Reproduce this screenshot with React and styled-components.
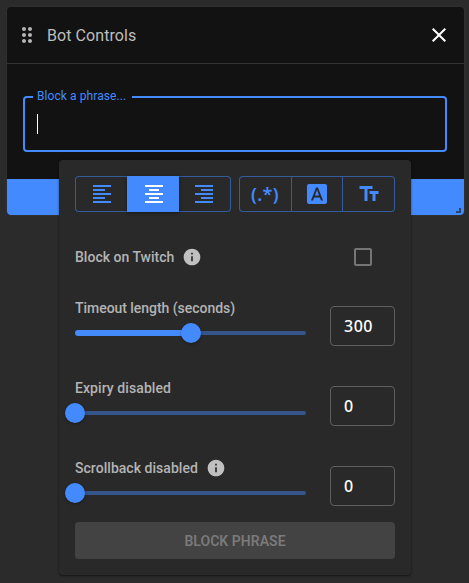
import React from "react";
import styled, { createGlobalStyle } from "styled-components";

const BLUE = "#448aff";

const GlobalStyle = createGlobalStyle`
  *, *::before, *::after { box-sizing: border-box; }
  body {
    margin: 0;
    background: #2b2b2b;
    color: #fff;
    font-family: Roboto, "Noto Sans", sans-serif;
    overflow: hidden;
  }
`;

const Page = styled.main`
  height: 583px;
  padding: 7px 5px 0 7px;
`;

const Panel = styled.section`
  position: relative;
  display: flex;
  flex-direction: column;
  width: 457px;
  height: 208px;
  background: #121212;
  border-radius: 4px;
  box-shadow: 0 0 0 1px #303030;
`;

const Header = styled.header`
  display: flex;
  align-items: center;
  height: 57px;
  padding: 0 13px 0 8px;
  border-bottom: 1px solid #333;
`;

const Title = styled.h1`
  flex: 1;
  margin: 0 0 0 8px;
  padding-top: 2px;
  font-size: 16px;
  line-height: 24px;
  font-weight: 400;
  letter-spacing: 0.07px;
  color: #bebebe;
`;

const Icon = styled.svg`
  display: block;
  flex: none;
  width: ${(p) => p.$size || 24}px;
  height: ${(p) => p.$size || 24}px;
  fill: ${(p) => p.$color || "currentColor"};
`;

const Body = styled.div`
  flex: 1;
  padding: 26px 17px 0 16px;
`;

const PhraseField = styled.fieldset`
  height: 62px;
  margin: 0;
  padding: 0 12px;
  min-width: 0;
  border: 2px solid ${BLUE};
  border-radius: 4px;
`;

const Legend = styled.legend`
  margin-left: -4px;
  padding: 0 7px 0 4px;
  width: 99px;
  height: 14px;
  font-size: 12px;
  line-height: 13px;
  letter-spacing: 0.08px;
  white-space: nowrap;
  color: ${BLUE};
`;

const Caret = styled.div`
  width: 1px;
  height: 20px;
  margin-top: 10px;
  background: #fff;
`;

const Footer = styled.footer`
  display: flex;
  align-items: flex-end;
  justify-content: flex-end;
  height: 36px;
  padding: 0 3px 2px 0;
  background: ${BLUE};
  border-radius: 0 0 4px 4px;
`;

const ResizeGrip = styled.span`
  width: 5px;
  height: 5px;
  border: solid #27446f;
  border-width: 0 2px 2px 0;
`;

const Popover = styled.div`
  position: absolute;
  left: 52px;
  top: 153px;
  width: 352px;
  height: 415px;
  padding: 16px;
  display: flex;
  flex-direction: column;
  background: #292929;
  border-radius: 4px;
  box-shadow: 0 1px 2px rgba(0, 0, 0, 0.45), 0 0 3px rgba(0, 0, 0, 0.15);
`;

const Toolbar = styled.div`
  display: flex;
  gap: 8px;
`;

const ToggleGroup = styled.div`
  display: grid;
  grid-template-columns: ${(p) => p.$columns || "52px 52px 52px"};
  width: 156px;
  height: 36px;
  border-radius: 4px;
  box-shadow: inset 0 0 0 1px #345b9e;
`;

const Toggle = styled.button`
  display: flex;
  align-items: center;
  justify-content: center;
  min-width: 0;
  padding: 0 ${(p) => p.$right || 0}px 0 ${(p) => p.$left || 0}px;
  border: 0;
  border-right: ${(p) => (p.$divider ? "1px solid #345b9e" : "0")};
  background: ${(p) => (p.$active ? BLUE : "transparent")};
  box-shadow: ${(p) => (p.$active ? "0 1px 3px rgba(0,0,0,.5)" : "none")};
  color: ${(p) => (p.$active ? "#fff" : BLUE)};
`;

const RegexMark = styled.span`
  font: 600 18px/24px "Noto Sans", sans-serif;
  letter-spacing: 0.4px;
`;

const CheckRow = styled.div`
  display: flex;
  align-items: center;
  justify-content: space-between;
  height: 24px;
  margin: 33px 20px 0 0;
`;

const Label = styled.div`
  display: flex;
  align-items: center;
  gap: 8px;
  height: 20px;
  font-size: 14px;
  line-height: 20px;
  font-weight: 500;
  letter-spacing: ${(p) => p.$spacing || "0"};
  white-space: nowrap;
  color: #b4b4b4;
`;

const SliderRow = styled.div`
  display: flex;
  justify-content: space-between;
  height: 40px;
  margin-top: ${(p) => p.$gap || 40}px;
`;

const SliderColumn = styled.div`
  width: 231px;
  margin-top: -8px;
`;

const Slider = styled.div`
  display: flex;
  align-items: center;
  height: 20px;
  margin-top: 5px;
`;

const Track = styled.span`
  flex: none;
  width: ${(p) => p.$value}px;
  height: 6px;
  background: ${BLUE};
  border-radius: 3px 0 0 3px;
`;

const Thumb = styled.span`
  flex: none;
  width: 20px;
  height: 20px;
  margin: 0 -10px;
  border-radius: 50%;
  background: ${BLUE};
  box-shadow: 0 1px 3px rgba(0, 0, 0, 0.35);
  z-index: 1;
`;

const Rail = styled.span`
  flex: 1;
  height: 4px;
  background: #34548a;
  border-radius: 0 2px 2px 0;
`;

const NumberBox = styled.input`
  width: 65px;
  height: 40px;
  padding: 0 13px;
  border: 1px solid #5f5f5f;
  border-radius: 4px;
  background: transparent;
  outline: 0;
  color: #fff;
  font: 500 16px/24px "Noto Sans", sans-serif;
  letter-spacing: 0.5px;
`;

const SubmitButton = styled.button`
  height: 37px;
  margin-top: 16px;
  padding: 0;
  border: 0;
  border-radius: 4px;
  background: #434343;
  color: #7a7a7a;
  font: 600 14px/24px Roboto, sans-serif;
  letter-spacing: 0.04px;
`;

const paths = {
  drag: "M11 18c0 1.1-.9 2-2 2s-2-.9-2-2 .9-2 2-2 2 .9 2 2zm-2-8c-1.1 0-2 .9-2 2s.9 2 2 2 2-.9 2-2-.9-2-2-2zm0-6c-1.1 0-2 .9-2 2s.9 2 2 2 2-.9 2-2-.9-2-2-2zm6 4c1.1 0 2-.9 2-2s-.9-2-2-2-2 .9-2 2 .9 2 2 2zm0 2c-1.1 0-2 .9-2 2s.9 2 2 2 2-.9 2-2-.9-2-2-2zm0 6c-1.1 0-2 .9-2 2s.9 2 2 2 2-.9 2-2-.9-2-2-2z",
  close: "M19 6.41 17.59 5 12 10.59 6.41 5 5 6.41 10.59 12 5 17.59 6.41 19 12 13.41 17.59 19 19 17.59 13.41 12z",
  left: "M3 3h18v2H3zM3 7h12v2H3zM3 11h18v2H3zM3 15h12v2H3zM3 19h18v2H3z",
  center: "M3 3h18v2H3zM7 7h10v2H7zM3 11h18v2H3zM7 15h10v2H7zM3 19h18v2H3z",
  right: "M3 3h18v2H3zM9 7h12v2H9zM3 11h18v2H3zM9 15h12v2H9zM3 19h18v2H3z",
  font: "M9.93 13.5h4.14L12 7.98 9.93 13.5zM20 2H4c-1.1 0-2 .9-2 2v16c0 1.1.9 2 2 2h16c1.1 0 2-.9 2-2V4c0-1.1-.9-2-2-2zm-4.05 16.5-1.14-3H9.17l-1.12 3H5.96l5.11-13h1.86l5.11 13h-2.09z",
  text: "M2.5 4v3h5v12h3V7h5V4h-13zm19 5h-9v3h3v7h3v-7h3V9z",
  info: "M12 2C6.48 2 2 6.48 2 12s4.48 10 10 10 10-4.48 10-10S17.52 2 12 2zm1 15h-2v-6h2v6zm0-8h-2V7h2v2z",
  checkbox: "M19 5v14H5V5h14m0-2H5c-1.1 0-2 .9-2 2v14c0 1.1.9 2 2 2h14c1.1 0 2-.9 2-2V5c0-1.1-.9-2-2-2z",
};

const Glyph = ({ name, size, color }) => (
  <Icon viewBox="0 0 24 24" $size={size} $color={color} aria-hidden="true">
    <path d={paths[name]} />
  </Icon>
);

const SliderField = ({ label, value, position, info, gap, spacing }) => (
  <SliderRow $gap={gap}>
    <SliderColumn>
      <Label $spacing={spacing}>
        {label}
        {info && <Glyph name="info" size={20} color="#c0c0c0" />}
      </Label>
      <Slider>
        <Track $value={position} />
        <Thumb />
        <Rail />
      </Slider>
    </SliderColumn>
    <NumberBox defaultValue={value} aria-label={label} />
  </SliderRow>
);

export default function App() {
  return (
    <Page>
      <GlobalStyle />
      <Panel>
        <Header>
          <Glyph name="drag" color="#b5b5b5" />
          <Title>Bot Controls</Title>
          <Glyph name="close" />
        </Header>
        <Body>
          <PhraseField>
            <Legend>Block a phrase...</Legend>
            <Caret />
          </PhraseField>
        </Body>
        <Footer>
          <ResizeGrip />
        </Footer>
        <Popover>
          <Toolbar>
            <ToggleGroup>
              <Toggle $left={2} aria-label="Align left"><Glyph name="left" /></Toggle>
              <Toggle $left={2} $active aria-label="Align center"><Glyph name="center" /></Toggle>
              <Toggle $right={2} aria-label="Align right"><Glyph name="right" /></Toggle>
            </ToggleGroup>
            <ToggleGroup $columns="53px 51px 52px">
              <Toggle $divider><RegexMark>(.*)</RegexMark></Toggle>
              <Toggle $divider aria-label="Match case"><Glyph name="font" /></Toggle>
              <Toggle aria-label="Whole words"><Glyph name="text" /></Toggle>
            </ToggleGroup>
          </Toolbar>
          <CheckRow>
            <Label $spacing="0.01px">
              Block on Twitch
              <Glyph name="info" size={20} color="#c0c0c0" />
            </Label>
            <Glyph name="checkbox" color="#757575" />
          </CheckRow>
          <SliderField label="Timeout length (seconds)" value="300" position={116} gap={37} spacing="-0.04px" />
          <SliderField label="Expiry disabled" value="0" position={0} spacing="0.08px" />
          <SliderField label="Scrollback disabled" value="0" position={0} info spacing="0.04px" />
          <SubmitButton disabled>BLOCK PHRASE</SubmitButton>
        </Popover>
      </Panel>
    </Page>
  );
}
